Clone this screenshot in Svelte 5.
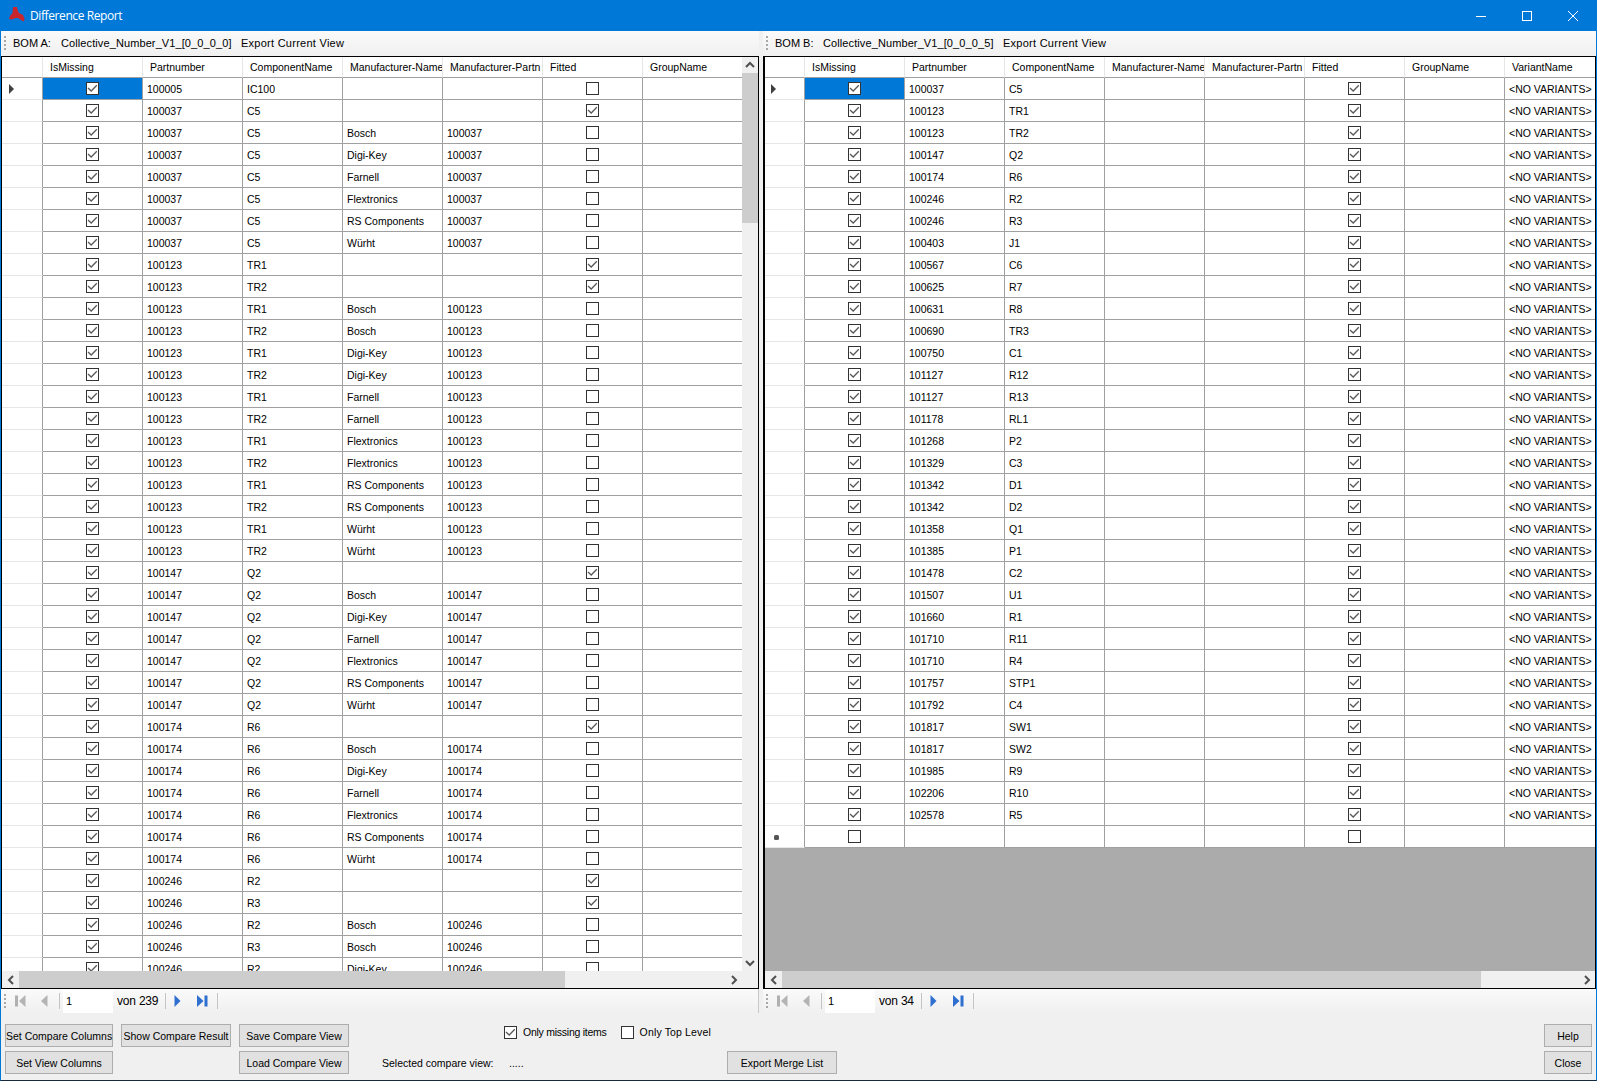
<script>
  const mfrs = ['Bosch', 'Digi-Key', 'Farnell', 'Flextronics', 'RS Components', 'Würht'];
  const columns = ['IsMissing', 'Partnumber', 'ComponentName', 'Manufacturer-Name', 'Manufacturer-Partn', 'Fitted', 'GroupName'];

  function buildLeft() {
    const out = [];
    const top = (pn, name) => out.push({ pn, name, mfr: '', part: '', fitted: true });
    const sub = (pn, name, mfr) => out.push({ pn, name, mfr, part: pn, fitted: false });
    out.push({ pn: '100005', name: 'IC100', mfr: '', part: '', fitted: false });
    top('100037', 'C5');
    mfrs.forEach((m) => sub('100037', 'C5', m));
    top('100123', 'TR1');
    top('100123', 'TR2');
    mfrs.forEach((m) => { sub('100123', 'TR1', m); sub('100123', 'TR2', m); });
    top('100147', 'Q2');
    mfrs.forEach((m) => sub('100147', 'Q2', m));
    top('100174', 'R6');
    mfrs.forEach((m) => sub('100174', 'R6', m));
    top('100246', 'R2');
    top('100246', 'R3');
    sub('100246', 'R2', 'Bosch');
    sub('100246', 'R3', 'Bosch');
    sub('100246', 'R2', 'Digi-Key');
    return out;
  }

  const leftRows = buildLeft();
  const rightData = [
    ['100037','C5'],['100123','TR1'],['100123','TR2'],['100147','Q2'],['100174','R6'],['100246','R2'],['100246','R3'],
    ['100403','J1'],['100567','C6'],['100625','R7'],['100631','R8'],['100690','TR3'],['100750','C1'],['101127','R12'],
    ['101127','R13'],['101178','RL1'],['101268','P2'],['101329','C3'],['101342','D1'],['101342','D2'],['101358','Q1'],
    ['101385','P1'],['101478','C2'],['101507','U1'],['101660','R1'],['101710','R11'],['101710','R4'],['101757','STP1'],
    ['101792','C4'],['101817','SW1'],['101817','SW2'],['101985','R9'],['102206','R10'],['102578','R5']
  ];
  const rightRows = rightData.map(([pn, name]) => ({ pn, name, mfr: '', part: '', fitted: true, variant: '<NO VARIANTS>' }));
</script>

{#snippet check(on)}
  <svg class="cb" width="13" height="13" viewBox="0 0 13 13" aria-hidden="true">
    <rect x="0.5" y="0.5" width="12" height="12" fill="#fff" stroke="#333" />
    {#if on}<path d="M2 6 L5.2 9 L10.8 3.2" fill="none" stroke="#5a5a5a" stroke-width="1.3" />{/if}
  </svg>
{/snippet}

{#snippet chev(d)}
  <svg width="10" height="10" viewBox="0 0 10 10" aria-hidden="true">
    <path {d} fill="none" stroke="#505050" stroke-width="2" />
  </svg>
{/snippet}

{#snippet strip(label, file)}
  <div class="strip">
    <span class="grip"></span>
    <span class="s1">{label}</span>
    <span class="s2">{file}</span>
    <span class="s3">Export Current View</span>
  </div>
{/snippet}

{#snippet nav(total)}
  <div class="nav">
    <span class="grip short"></span>
    <svg class="ni first" width="11" height="12" viewBox="0 0 11 12" aria-hidden="true"><rect x="0" y="0.5" width="3" height="11" fill="#b0b0b0" /><path d="M10.5 0 V12 L4 6 Z" fill="#b4b4b4" /></svg>
    <svg class="ni prev" width="7" height="12" viewBox="0 0 7 12" aria-hidden="true"><path d="M6.5 0 V12 L0 6 Z" fill="#b4b4b4" /></svg>
    <span class="sep s-a"></span>
    <span class="page">1</span>
    <span class="von">von {total}</span>
    <span class="sep s-b"></span>
    <svg class="ni next" width="7" height="12" viewBox="0 0 7 12" aria-hidden="true"><path d="M0.5 0 V12 L6.5 6 Z" fill="#2f6fd0" /></svg>
    <svg class="ni last" width="11" height="12" viewBox="0 0 11 12" aria-hidden="true"><path d="M0 0 V12 L6.5 6 Z" fill="#2f6fd0" /><rect x="7.5" y="0.5" width="3" height="11" fill="#2f6fd0" /></svg>
    <span class="sep s-c"></span>
  </div>
{/snippet}

<div class="window">
  <header class="title">
    <svg class="logo" width="16" height="15" viewBox="0 0 16 15" aria-hidden="true">
      <path d="M4 0 H8 L9 4 L10 6 L14 8 L15.5 12 L15 14.5 L12 13 L9 11 L6.5 11 L3 12.5 L0 12 L1 9 L3.5 6 Z" fill="#c9252d" />
    </svg>
    <span class="title-text">Difference Report</span>
    <div class="controls">
      <span class="ctl"><svg width="12" height="12" viewBox="0 0 12 12" aria-hidden="true"><path d="M1 6.5 H11" stroke="#fff" /></svg></span>
      <span class="ctl"><svg width="12" height="12" viewBox="0 0 12 12" aria-hidden="true"><rect x="1.5" y="1.5" width="9" height="9" fill="none" stroke="#fff" /></svg></span>
      <span class="ctl"><svg width="12" height="12" viewBox="0 0 12 12" aria-hidden="true"><path d="M1 1 L11 11 M11 1 L1 11" stroke="#fff" /></svg></span>
    </div>
  </header>

  <main class="panes">
    <section class="pane left">
      {@render strip('BOM A:', 'Collective_Number_V1_[0_0_0_0]')}
      <div class="grid">
        <div class="view">
          <div class="table">
            <div class="row head">
              <div class="rh"></div>
              {#each columns as c}<div class="hc">{c}</div>{/each}
            </div>
            {#each leftRows as r, i}
              <div class="row">
                <div class="rh">{#if i === 0}<span class="arrow"></span>{/if}</div>
                <div class="c ctr" class:sel={i === 0}>{@render check(true)}</div>
                <div class="c">{r.pn}</div>
                <div class="c">{r.name}</div>
                <div class="c">{r.mfr}</div>
                <div class="c">{r.part}</div>
                <div class="c ctr">{@render check(r.fitted)}</div>
                <div class="c"></div>
              </div>
            {/each}
          </div>
          <div class="vbar">
            <span class="btn-v">{@render chev('M1 7 L5 3 L9 7')}</span>
            <span class="vthumb"></span>
            <span class="vtrack"></span>
            <span class="btn-v">{@render chev('M1 3 L5 7 L9 3')}</span>
          </div>
        </div>
        <div class="hbar">
          <span class="btn-h">{@render chev('M7 1 L3 5 L7 9')}</span>
          <span class="hthumb lt"></span>
          <span class="htrack"></span>
          <span class="btn-h">{@render chev('M3 1 L7 5 L3 9')}</span>
          <span class="corner"></span>
        </div>
      </div>
      {@render nav(239)}
    </section>

    <section class="pane right">
      {@render strip('BOM B:', 'Collective_Number_V1_[0_0_0_5]')}
      <div class="grid">
        <div class="view">
          <div class="table">
            <div class="row head">
              <div class="rh"></div>
              {#each columns as c}<div class="hc">{c}</div>{/each}
              <div class="hc">VariantName</div>
            </div>
            {#each rightRows as r, i}
              <div class="row">
                <div class="rh">{#if i === 0}<span class="arrow"></span>{/if}</div>
                <div class="c ctr" class:sel={i === 0}>{@render check(true)}</div>
                <div class="c">{r.pn}</div>
                <div class="c">{r.name}</div>
                <div class="c"></div>
                <div class="c"></div>
                <div class="c ctr">{@render check(r.fitted)}</div>
                <div class="c"></div>
                <div class="c">{r.variant}</div>
              </div>
            {/each}
            <div class="row">
              <div class="rh"><span class="star"></span></div>
              <div class="c ctr">{@render check(false)}</div>
              <div class="c"></div>
              <div class="c"></div>
              <div class="c"></div>
              <div class="c"></div>
              <div class="c ctr">{@render check(false)}</div>
              <div class="c"></div>
              <div class="c"></div>
            </div>
          </div>
        </div>
        <div class="hbar">
          <span class="btn-h">{@render chev('M7 1 L3 5 L7 9')}</span>
          <span class="hthumb rt"></span>
          <span class="htrack"></span>
          <span class="btn-h">{@render chev('M3 1 L7 5 L3 9')}</span>
        </div>
      </div>
      {@render nav(34)}
    </section>
  </main>

  <footer class="bottom">
    <button class="b r1 c1">Set Compare Columns</button>
    <button class="b r1 c2">Show Compare Result</button>
    <button class="b r1 c3">Save Compare View</button>
    <div class="checks">
      <span class="lbl one">{@render check(true)}<span>Only missing items</span></span>
      <span class="lbl two">{@render check(false)}<span>Only Top Level</span></span>
    </div>
    <button class="b r1 c9">Help</button>
    <button class="b r2 c1">Set View Columns</button>
    <button class="b r2 c3">Load Compare View</button>
    <span class="sel-label">Selected compare view:</span>
    <span class="sel-value">.....</span>
    <button class="b r2 c7">Export Merge List</button>
    <button class="b r2 c9">Close</button>
  </footer>
</div>

<style>
  :global(body) {
    margin: 0;
    overflow: hidden;
  }
  .window {
    box-sizing: border-box;
    width: 1597px;
    height: 1081px;
    display: flex;
    flex-direction: column;
    background: #f0f0f0;
    border-left: 1px solid #0078d7;
    border-right: 1px solid #0078d7;
    border-bottom: 1px solid #17283a;
    font: 10.5px "Liberation Sans", Arial, sans-serif;
    color: #000;
    overflow: hidden;
  }
  .title {
    flex: none;
    height: 31px;
    margin-left: -1px;
    margin-right: -1px;
    background: #0078d7;
    display: flex;
    align-items: center;
    color: #fff;
  }
  .logo {
    margin-left: 9px;
    margin-top: -3px;
  }
  .title-text {
    margin-left: 5px;
    font: 12px "Open Sans", sans-serif;
    letter-spacing: -0.4px;
  }
  .controls {
    margin-left: auto;
    display: flex;
    margin-right: 1px;
  }
  .ctl {
    width: 46px;
    height: 30px;
    display: flex;
    align-items: center;
    justify-content: center;
  }
  .panes {
    flex: none;
    height: 982px;
    display: flex;
    gap: 4px;
  }
  .pane {
    display: flex;
    flex-direction: column;
    min-width: 0;
  }
  .pane.left { width: 758px; }
  .pane.right { width: 833px; }
  .strip {
    flex: none;
    height: 25px;
    box-sizing: border-box;
    display: flex;
    align-items: center;
    background: linear-gradient(#fafafa, #f0f0f0);
    white-space: nowrap;
    padding-bottom: 1px;
    font-size: 11px;
  }
  .grip {
    flex: none;
    width: 2px;
    height: 14px;
    margin-left: 3px;
    background: repeating-linear-gradient(#a8a8a8 0 2px, transparent 2px 4px);
  }
  .s1 { margin-left: 7px; width: 48px; }
  .s2 { width: 180px; letter-spacing: 0.1px; }
  .s3 { letter-spacing: 0.26px; }
  .grid {
    flex: none;
    height: 933px;
    box-sizing: border-box;
    display: flex;
    flex-direction: column;
    border: 1px solid #000;
    background: #fff;
  }
  .right .grid { border-left-width: 2px; }
  .view {
    flex: 1;
    min-height: 0;
    display: flex;
    background: #ababab;
  }
  .table {
    flex: 1;
    min-width: 0;
    overflow: hidden;
  }
  .row {
    display: flex;
    height: 22px;
    width: max-content;
  }
  .row.head { height: 21px; }
  .rh {
    flex: none;
    box-sizing: border-box;
    width: 41px;
    height: 100%;
    background: #fff;
    border-right: 1px solid #a0a0a0;
    border-bottom: 1px solid #e6e6e6;
    display: flex;
    align-items: center;
    padding-left: 7px;
  }
  .right .rh { width: 40px; padding-left: 6px; }
  .head .rh {
    border-right-color: #e6e6e6;
    border-bottom-color: #a0a0a0;
  }
  .hc {
    flex: none;
    box-sizing: border-box;
    width: 100px;
    height: 100%;
    line-height: 21px;
    background: #fff;
    padding-left: 7px;
    border-right: 1px solid #e6e6e6;
    border-bottom: 1px solid #a0a0a0;
    white-space: nowrap;
    overflow: hidden;
  }
  .c {
    flex: none;
    box-sizing: border-box;
    width: 100px;
    height: 100%;
    line-height: 22px;
    background: #fff;
    padding-left: 4px;
    border-right: 1px solid #a0a0a0;
    border-bottom: 1px solid #a0a0a0;
    white-space: nowrap;
    overflow: hidden;
  }
  .ctr {
    display: flex;
    align-items: center;
    justify-content: center;
    padding-left: 0;
  }
  .c.sel { background: #0078d7; }
  .cb {
    flex: none;
    display: block;
  }
  .arrow {
    width: 0;
    height: 0;
    border-left: 5px solid #404040;
    border-top: 5px solid transparent;
    border-bottom: 5px solid transparent;
  }
  .star {
    width: 5px;
    height: 5px;
    border-radius: 1.5px;
    background: #555;
    margin-left: 3px;
    margin-top: 2px;
  }
  .vbar {
    flex: none;
    width: 16px;
    display: flex;
    flex-direction: column;
    background: #f0f0f0;
  }
  .btn-v {
    flex: none;
    height: 16px;
    display: flex;
    align-items: center;
    justify-content: center;
  }
  .vthumb {
    flex: none;
    height: 150px;
    background: #cdcdcd;
  }
  .vtrack { flex: 1; }
  .hbar {
    flex: none;
    height: 17px;
    display: flex;
    background: #f0f0f0;
  }
  .btn-h {
    flex: none;
    width: 17px;
    display: flex;
    align-items: center;
    justify-content: center;
  }
  .hthumb {
    flex: none;
    background: #cdcdcd;
  }
  .hthumb.lt { width: 546px; }
  .hthumb.rt { width: 699px; }
  .htrack { flex: 1; }
  .corner { flex: none; width: 16px; }
  .nav {
    flex: none;
    height: 24px;
    display: flex;
    align-items: center;
    background: linear-gradient(#fafafa, #f0f0f0);
    white-space: nowrap;
    position: relative;
  }
  .left .nav {
    border-right: 1px solid #c8c8c8;
    box-sizing: border-box;
  }
  .ni { flex: none; }
  .first { margin-left: 9px; }
  .prev { margin-left: 15px; }
  .next { margin-left: 8px; }
  .last { margin-left: 16px; }
  .sep {
    flex: none;
    width: 1px;
    height: 16px;
    background: #c4c4c4;
  }
  .s-a { margin-left: 11px; }
  .s-b { margin-left: 7px; }
  .s-c { margin-left: 9px; }
  .page {
    flex: none;
    box-sizing: border-box;
    width: 50px;
    height: 23px;
    line-height: 23px;
    margin-left: 3px;
    padding-left: 3px;
    background: #fff;
    font-size: 11px;
  }
  .von {
    flex: none;
    margin-left: 4px;
    font-size: 12px;
    letter-spacing: -0.2px;
  }
  .bottom {
    flex: 1;
    min-height: 0;
    box-sizing: border-box;
    display: grid;
    grid-template-columns: 108px 110px 110px 17px 114px 215px 110px 1fr 48px;
    grid-template-rows: 23px 23px;
    column-gap: 8px;
    row-gap: 4px;
    padding: 11px 4px 0 4px;
    background: #f0f0f0;
  }
  .b {
    box-sizing: border-box;
    margin: 0;
    padding: 0;
    background: #e1e1e1;
    border: 1px solid #adadad;
    font: 10.5px "Liberation Sans", Arial, sans-serif;
    color: #000;
    white-space: nowrap;
  }
  .r1 { grid-row: 1; }
  .r2 { grid-row: 2; }
  .c1 { grid-column: 1; }
  .c2 { grid-column: 2; }
  .c3 { grid-column: 3; }
  .c7 { grid-column: 7; }
  .c9 { grid-column: 9; }
  .checks {
    grid-row: 1;
    grid-column: 6 / 8;
    display: flex;
    align-items: center;
    height: 14px;
    margin-top: 1px;
  }
  .lbl {
    display: inline-flex;
    align-items: center;
    gap: 6px;
  }
  .lbl.one { letter-spacing: -0.25px; }
  .lbl.two { margin-left: 14px; letter-spacing: 0.15px; }
  .sel-label {
    grid-row: 2;
    grid-column: 5;
    align-self: center;
    white-space: nowrap;
  }
  .sel-value {
    grid-row: 2;
    grid-column: 6;
    align-self: center;
    padding-left: 5px;
  }
</style>
